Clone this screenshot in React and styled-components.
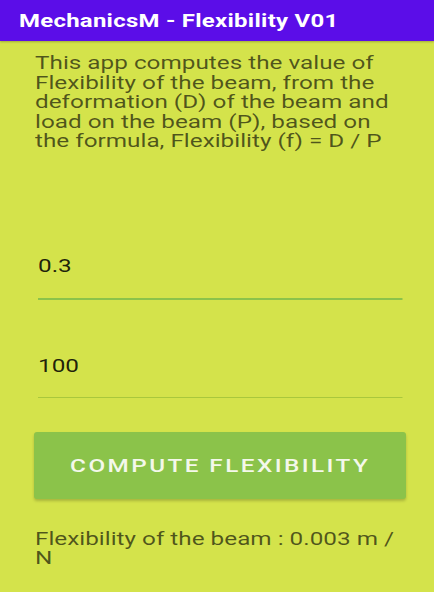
import React from 'react'
import styled, { createGlobalStyle } from 'styled-components'

// the reference is a phone capture stretched sideways, so the text is widened with scaleX
const WIDE = 1.35

const GlobalStyle = createGlobalStyle`
  html, body {
    margin: 0;
    padding: 0;
    background: #d4e34b;
  }
  body {
    font-family: Roboto, "Liberation Sans", sans-serif;
  }
`

const Screen = styled.div`
  width: 434px;
  min-height: 592px;
  background: #d4e34b;
  display: flex;
  flex-direction: column;
`

const AppBar = styled.header`
  height: 41px;
  background: #5b0de8;
  display: flex;
  align-items: center;
  padding-left: 19px;
  box-shadow: 0 1px 2px rgba(0, 0, 0, 0.25);
`

const Title = styled.h1`
  margin: 0;
  font-size: 18px;
  font-weight: 700;
  color: #ffffff;
  letter-spacing: 0.2px;
  white-space: nowrap;
  transform: scaleX(1.33);
  transform-origin: 0 50%;
`

const Content = styled.main`
  display: flex;
  flex-direction: column;
  padding: 12px 28px 0 35px;
`

const Paragraph = styled.p`
  margin: ${p => p.$top || 0}px 0 0 0;
  width: ${371 / WIDE}px;
  font-size: 18px;
  line-height: 19.5px;
  color: rgba(0, 0, 0, 0.63);
  transform: scaleX(${WIDE});
  transform-origin: 0 0;
`

const Field = styled.input`
  display: block;
  box-sizing: border-box;
  width: ${365 / WIDE}px;
  margin: ${p => p.$top}px 0 0 3px;
  height: ${p => (p.$focused ? 54 : 52)}px;
  padding: 0 0 12px 0;
  border: none;
  border-bottom: ${p => (p.$focused ? '2px solid #8bc34a' : '1px solid #a9c83c')};
  background: transparent;
  outline: none;
  font-family: Roboto, "Liberation Sans", sans-serif;
  font-size: 18px;
  color: rgba(0, 0, 0, 0.87);
  transform: scaleX(${WIDE});
  transform-origin: 0 0;
`

const ComputeButton = styled.button`
  margin: 34px 0 0 -1px;
  width: 372px;
  height: 67px;
  border: none;
  border-radius: 3px;
  background: #8bc34a;
  color: #f4f8ea;
  font-family: Roboto, "Liberation Sans", sans-serif;
  font-size: 18px;
  font-weight: 500;
  text-transform: uppercase;
  box-shadow: 0 2px 3px rgba(0, 0, 0, 0.2);
  cursor: pointer;
`

const ButtonLabel = styled.span`
  display: inline-block;
  letter-spacing: 1.8px;
  transform: scaleX(${WIDE});
`

export default function App() {
  return (
    <>
      <GlobalStyle />
      <Screen>
        <AppBar>
          <Title>MechanicsM - Flexibility V01</Title>
        </AppBar>
        <Content>
          <Paragraph>
            This app computes the value of Flexibility of the beam, from the
            deformation (D) of the beam and load on the beam (P), based on the
            formula, Flexibility (f) = D / P
          </Paragraph>
          <Field $top={95} $focused readOnly value="0.3" />
          <Field $top={46} readOnly value="100" />
          <ComputeButton>
            <ButtonLabel>Compute Flexibility</ButtonLabel>
          </ComputeButton>
          <Paragraph $top={30}>Flexibility of the beam : 0.003 m / N</Paragraph>
        </Content>
      </Screen>
    </>
  )
}
